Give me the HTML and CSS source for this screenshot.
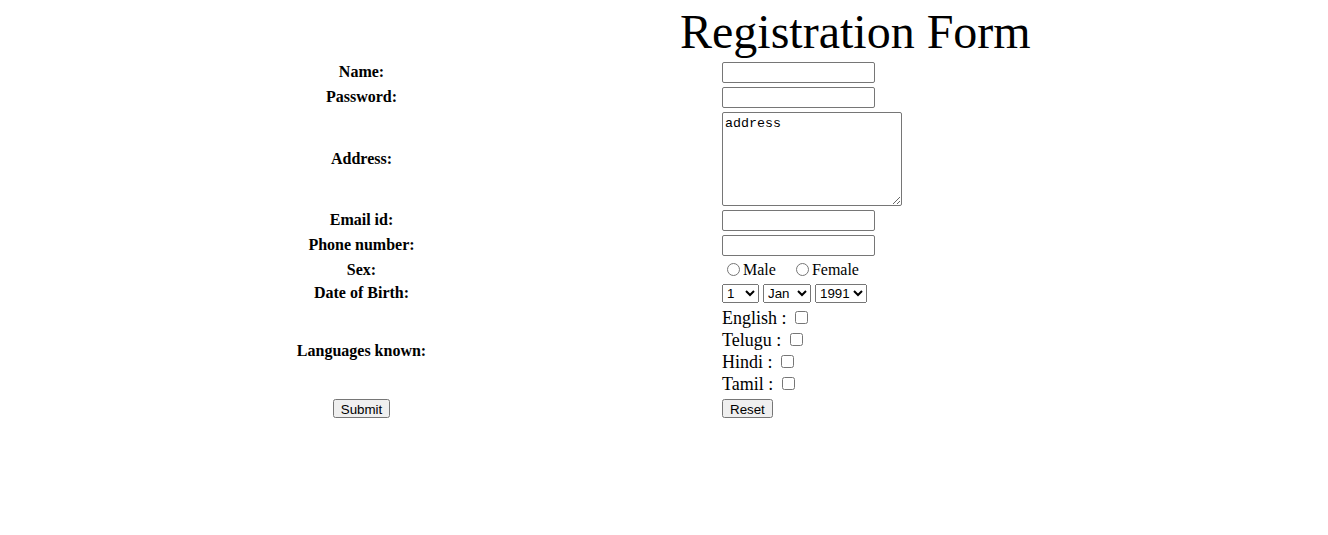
FILE: index.html
```html
<!DOCTYPE html>
<html>
<head>
<meta charset="utf-8">
<title>Registration Form</title>
<link rel="stylesheet" href="styles.css">
</head>
<body>
<h1 class="title">Registration Form</h1>
<form class="form">
  <div class="lbl">Name:</div>
  <div class="fld"><input class="text" type="text"></div>

  <div class="lbl">Password:</div>
  <div class="fld"><input class="text" type="password"></div>

  <div class="lbl">Address:</div>
  <div class="fld"><textarea class="area">address</textarea></div>

  <div class="lbl">Email id:</div>
  <div class="fld"><input class="text" type="text"></div>

  <div class="lbl">Phone number:</div>
  <div class="fld"><input class="text" type="text"></div>

  <div class="lbl">Sex:</div>
  <div class="fld sex">
    <label class="opt male"><input class="radio" type="radio" name="sex">Male</label>
    <label class="opt"><input class="radio" type="radio" name="sex">Female</label>
  </div>

  <div class="lbl">Date of Birth:</div>
  <div class="fld dob">
    <select class="sel s-day"><option>1</option><option>2</option><option>3</option></select>
    <select class="sel s-mon"><option>Jan</option><option>Feb</option><option>Mar</option></select>
    <select class="sel s-year"><option>1991</option><option>1992</option><option>1993</option></select>
  </div>

  <div class="lbl">Languages known:</div>
  <div class="fld langs">
    <div class="lang">English : <input class="check" type="checkbox"></div>
    <div class="lang">Telugu : <input class="check" type="checkbox"></div>
    <div class="lang">Hindi : <input class="check" type="checkbox"></div>
    <div class="lang">Tamil : <input class="check" type="checkbox"></div>
  </div>

  <div class="act act-left"><button class="btn" type="submit">Submit</button></div>
  <div class="act"><button class="btn" type="reset">Reset</button></div>
</form>
</body>
</html>
```

FILE: styles.css
```css
html, body {
  margin: 0;
  padding: 0;
  background: #ffffff;
  color: #000000;
  font-family: "Liberation Serif", "Times New Roman", serif;
  font-size: 16px;
}

.title {
  margin: 0 0 0 680px;
  padding-top: 4px;
  height: 55px;
  font-size: 48px;
  font-weight: normal;
  line-height: 55px;
  white-space: nowrap;
}

.form {
  display: grid;
  grid-template-columns: 717px 1fr;
  column-gap: 2px;
  row-gap: 4px;
  padding: 3px 0 0 3px;
}

.lbl {
  display: flex;
  align-items: center;
  justify-content: center;
  padding-bottom: 1px;
  font-weight: bold;
  font-size: 16px;
}

.fld {
  display: flex;
  align-items: center;
  min-height: 19px;
}

.act {
  display: flex;
  align-items: flex-start;
}

.act-left {
  justify-content: center;
}

.text {
  box-sizing: border-box;
  width: 153px;
  height: 21px;
  margin: 0;
  padding: 1px 2px;
  border: 1px solid #767676;
  border-radius: 2px;
  font-family: "Liberation Sans", Arial, sans-serif;
  font-size: 13.333px;
}

.area {
  box-sizing: border-box;
  width: 180px;
  height: 94px;
  margin: 0;
  padding: 3px 2px 2px;
  border: 1px solid #767676;
  border-radius: 2px;
  font-family: "Liberation Mono", "Courier New", monospace;
  font-size: 13.333px;
  color: #000;
  resize: both;
}

.sex {
  height: 20px;
  font-size: 16px;
}

.opt {
  display: inline-flex;
  align-items: center;
  white-space: nowrap;
}

.male {
  margin-right: 15px;
}

.radio {
  width: 13px;
  height: 13px;
  margin: 0 3px 2px 5px;
}

.dob {
  height: 19px;
  gap: 4px;
}

.sel {
  box-sizing: border-box;
  height: 19px;
  margin: 0;
  font-family: "Liberation Sans", Arial, sans-serif;
  font-size: 13.333px;
}

.s-day { width: 37px; }
.s-mon { width: 48px; }
.s-year { width: 52px; }

.langs {
  display: block;
  font-size: 18px;
}

.lang {
  height: 22px;
  line-height: 22px;
  white-space: nowrap;
}

.check {
  width: 13px;
  height: 13px;
  margin: 3px 3px 3px 4px;
  vertical-align: 0;
}

.btn {
  height: 19px;
  margin: 0;
  padding: 1px 6px;
  font-family: "Liberation Sans", Arial, sans-serif;
  font-size: 13.333px;
  line-height: 15px;
}
```
